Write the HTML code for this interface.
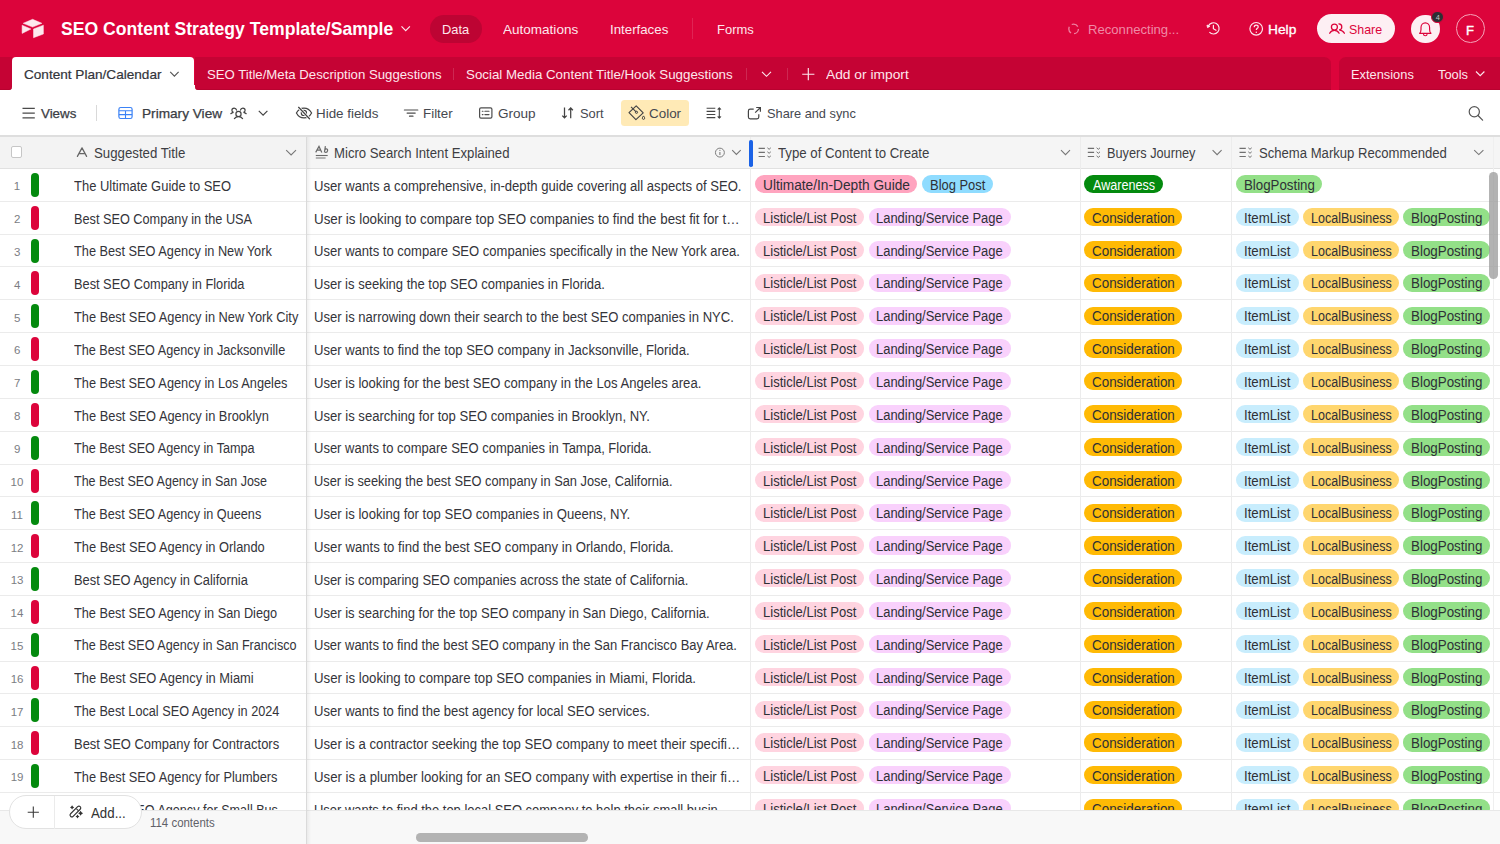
<!DOCTYPE html>
<html><head><meta charset="utf-8">
<style>
*{box-sizing:border-box;margin:0;padding:0}
html,body{width:1500px;height:844px;overflow:hidden;background:#fff}
body{position:relative;font-family:"Liberation Sans",sans-serif;font-size:13px;color:#1d1f25}
.abs{position:absolute;white-space:nowrap;line-height:1}
svg{position:absolute;overflow:visible}
.bx{position:absolute}
.rline{position:absolute;left:0;width:1500px;height:1px;background:#ebebeb}
.bar{position:absolute;left:31px;width:8px;height:24px;border-radius:4px}
.pill{position:absolute;border-radius:9.1px}
</style></head><body>

<!-- TOP BAR -->
<div class="bx" style="left:0;top:0;width:1500px;height:90px;background:#dc043b"></div>
<svg style="left:0;top:0" width="60" height="50" viewBox="0 0 60 50">
  <path d="M32.6 19.3 L41.9 23.3 L32.6 27.1 L23.2 23.3 Z" fill="#fde9ee" stroke="#fde9ee" stroke-width="0.5" stroke-linejoin="round"/>
  <path d="M22.1 25.2 L30.9 29 L22.1 33.4 Z" fill="#fde9ee" stroke="#fde9ee" stroke-width="0.5" stroke-linejoin="round"/>
  <path d="M33.5 29 L43.4 25.2 L43.4 34 L33.5 37.7 Z" fill="#fde9ee" stroke="#fde9ee" stroke-width="0.5" stroke-linejoin="round"/>
</svg>
<svg style="left:0;top:0" width="420" height="50" viewBox="0 0 420 50"><path d="M401.5 26.4 L405.7 30.6 L409.9 26.4" fill="none" stroke="#fde7ed" stroke-width="1.2"/></svg>
<div class="bx" style="left:430.1px;top:14.9px;width:51.8px;height:28px;border-radius:14px;background:#bd0433"></div>
<div class="bx" style="left:692px;top:18.3px;width:1px;height:20.7px;background:rgba(255,255,255,0.13)"></div>
<svg style="left:0;top:0" width="1500" height="50" viewBox="0 0 1500 50">
  <circle cx="1073.6" cy="28.9" r="4.8" fill="none" stroke="#ee80a0" stroke-width="1.3" stroke-dasharray="6.9 3.15"/>
  <path d="M1209.4 32.2 A5.6 5.6 0 1 0 1208.3 26.3" fill="none" stroke="#fde7ed" stroke-width="1.2"/>
  <path d="M1207 25 L1207.5 27.6 L1209.8 26.4 Z" fill="#fde7ed" stroke="#fde7ed" stroke-width="0.9" stroke-linejoin="round"/>
  <path d="M1213.4 25.4 V28.7 L1216 30.3" fill="none" stroke="#fde7ed" stroke-width="1.2" stroke-linecap="round"/>
  <circle cx="1256.2" cy="28.8" r="6.3" fill="none" stroke="#fde7ed" stroke-width="1.2"/>
  <path d="M1254.2 27.2 C1254.2 25.9 1255.1 25.1 1256.2 25.1 C1257.3 25.1 1258.2 25.9 1258.2 26.9 C1258.2 28.2 1256.3 28.4 1256.3 30" fill="none" stroke="#fde7ed" stroke-width="1.2"/>
  <circle cx="1256.3" cy="32.3" r="0.75" fill="#fde7ed"/>
</svg>
<div class="bx" style="left:1316.7px;top:14.4px;width:78.2px;height:28.9px;border-radius:14.5px;background:#fdeff3"></div>
<svg style="left:0;top:0" width="1500" height="50" viewBox="0 0 1500 50">
  <circle cx="1334.4" cy="27" r="3" fill="none" stroke="#dc043b" stroke-width="1.25"/>
  <path d="M1329.7 33.3 C1330.6 31.5 1332.3 30.4 1334.4 30.4 C1336.5 30.4 1338.2 31.5 1339.1 33.3" fill="none" stroke="#dc043b" stroke-width="1.25" stroke-linecap="round"/>
  <path d="M1338.9 23.9 C1340.6 24 1341.8 25.3 1341.8 26.9 C1341.8 28.5 1340.6 29.8 1339.1 29.9 C1341.6 30.2 1343.5 31.5 1344.4 33.3" fill="none" stroke="#dc043b" stroke-width="1.25" stroke-linecap="round"/>
</svg>
<div class="bx" style="left:1411.4px;top:14.6px;width:28.7px;height:28.7px;border-radius:50%;background:#fdeff3"></div>
<svg style="left:0;top:0" width="1500" height="50" viewBox="0 0 1500 50">
  <path d="M1419.6 33.3 C1420.7 32.6 1421 31.4 1421 29.6 V27.6 C1421 24.9 1422.9 22.9 1425.3 22.9 C1427.7 22.9 1429.6 24.9 1429.6 27.6 V29.6 C1429.6 31.4 1429.9 32.6 1431 33.3 Z" fill="none" stroke="#dc043b" stroke-width="1.15" stroke-linejoin="round"/>
  <path d="M1423.5 34 A1.8 1.8 0 0 0 1427.1 34" fill="none" stroke="#dc043b" stroke-width="1.1"/>
</svg>
<div class="bx" style="left:1430.8px;top:11.4px;width:13.4px;height:11.6px;border-radius:6.3px;background:#2e2f33;border:0.8px solid #dc043b"></div>
<div class="abs" style="left:1435.7px;top:14px;font-size:7.5px;color:#c8c8c8">4</div>
<div class="bx" style="left:1456px;top:14.2px;width:28.7px;height:28.7px;border-radius:50%;border:1.1px solid #f5a3b8"></div>
<div class="abs" style="left:1466px;top:24px;font-size:13px;-webkit-text-stroke:0.4px #fff;color:#fff">F</div>
<div class="abs" style="left:61.37px;top:21px;font-size:17.7px;font-weight:700;color:#fff;transform:scaleX(0.9953);transform-origin:0 0;">SEO Content Strategy Template/Sample</div><div class="abs" style="left:442.14px;top:23px;font-size:13px;color:#fde7ed;transform:scaleX(0.9890);transform-origin:0 0;">Data</div><div class="abs" style="left:503.17px;top:23px;font-size:13px;color:#fde7ed;transform:scaleX(1.0405);transform-origin:0 0;">Automations</div><div class="abs" style="left:609.67px;top:23px;font-size:13px;color:#fde7ed;transform:scaleX(1.0208);transform-origin:0 0;">Interfaces</div><div class="abs" style="left:717.03px;top:23px;font-size:13px;color:#fde7ed;transform:scaleX(0.9973);transform-origin:0 0;">Forms</div><div class="abs" style="left:1088.12px;top:23px;font-size:13px;color:#ef8aa6;transform:scaleX(1.0082);transform-origin:0 0;">Reconnecting...</div><div class="abs" style="left:1268.06px;top:23px;font-size:13px;-webkit-text-stroke:0.3px #fff;color:#fff;transform:scaleX(1.0588);transform-origin:0 0;">Help</div><div class="abs" style="left:1349.44px;top:23px;font-size:13px;color:#dc043b;transform:scaleX(0.9541);transform-origin:0 0;">Share</div>

<!-- TABS -->
<div class="bx" style="left:7px;top:85px;width:192px;height:5px;background:#fff"></div>
<div class="bx" style="left:0;top:57.3px;width:11.9px;height:32.7px;background:#c50334;border-bottom-right-radius:3.5px;box-shadow:inset 0 -1px 0 #b8022f"></div>
<div class="bx" style="left:194.5px;top:57.3px;width:1136.2px;height:32.7px;background:#c50334;border-top-right-radius:7px;border-bottom-left-radius:3.5px;box-shadow:inset 0 -1px 0 #b8022f"></div>
<div class="bx" style="left:1338.9px;top:57.3px;width:161.1px;height:32.7px;background:#c50334;border-top-left-radius:7px;box-shadow:inset 0 -1px 0 #b8022f"></div>
<div class="bx" style="left:12.3px;top:57.3px;width:182px;height:33px;background:#fff;border-radius:4px 4px 0 0"></div>
<svg style="left:0;top:0" width="1500" height="100" viewBox="0 0 1500 100">
  <path d="M170.2 71.9 L174.4 76.1 L178.6 71.9" fill="none" stroke="#555" stroke-width="1.15"/>
  <path d="M762 71.9 L766.5 76.3 L771 71.9" fill="none" stroke="#fde7ed" stroke-width="1.15"/>
  <path d="M808.3 68 V80.3 M802.2 74.2 H814.4" fill="none" stroke="#fde7ed" stroke-width="1.15"/>
  <path d="M1476 71.5 L1480.2 75.7 L1484.4 71.5" fill="none" stroke="#fde7ed" stroke-width="1.15"/>
</svg>
<div class="bx" style="left:453px;top:68.3px;width:1px;height:12px;background:rgba(255,255,255,0.15)"></div>
<div class="bx" style="left:745.5px;top:68.3px;width:1px;height:12px;background:rgba(255,255,255,0.15)"></div>
<div class="bx" style="left:787px;top:68.3px;width:1px;height:12px;background:rgba(255,255,255,0.15)"></div>
<div class="abs" style="left:24.42px;top:68px;font-size:13px;-webkit-text-stroke:0.2px #33353b;color:#33353b;transform:scaleX(1.0453);transform-origin:0 0;">Content Plan/Calendar</div><div class="abs" style="left:206.61px;top:68px;font-size:13px;color:#fde7ed;transform:scaleX(1.0143);transform-origin:0 0;">SEO Title/Meta Description Suggestions</div><div class="abs" style="left:466.10px;top:68px;font-size:13px;color:#fde7ed;transform:scaleX(1.0250);transform-origin:0 0;">Social Media Content Title/Hook Suggestions</div><div class="abs" style="left:825.67px;top:68px;font-size:13px;color:#fde7ed;transform:scaleX(1.0603);transform-origin:0 0;">Add or import</div><div class="abs" style="left:1350.64px;top:68px;font-size:13px;color:#fde7ed;transform:scaleX(0.9875);transform-origin:0 0;">Extensions</div><div class="abs" style="left:1437.71px;top:68px;font-size:13px;color:#fde7ed;transform:scaleX(0.9896);transform-origin:0 0;">Tools</div>

<!-- TOOLBAR -->
<div class="bx" style="left:0;top:135px;width:1500px;height:2px;background:#dedede"></div>
<div class="bx" style="left:96px;top:105px;width:1px;height:15.8px;background:#d9d9d9"></div>
<div class="bx" style="left:620.9px;top:99.8px;width:68px;height:26.1px;border-radius:3.5px;background:#ffeab6"></div>
<svg style="left:0;top:0" width="1500" height="140" viewBox="0 0 1500 140">
  <path d="M22.5 108.4 H34.8 M22.5 113.1 H34.8 M22.5 117.8 H34.8" stroke="#4a4a4a" stroke-width="1.2"/>
  <rect x="118.9" y="107.5" width="13.2" height="11" rx="1.8" fill="none" stroke="#3b82f6" stroke-width="1.2"/>
  <path d="M118.9 110.8 H132.1 M118.9 114.6 H132.1 M125.5 110.8 V118.5" stroke="#3b82f6" stroke-width="1.1"/>
  <circle cx="238.5" cy="113.9" r="2.6" fill="none" stroke="#444" stroke-width="1.2"/>
  <path d="M234.4 118.6 C235.3 117.3 236.7 116.6 238.5 116.6 C240.3 116.6 241.7 117.3 242.6 118.6" fill="none" stroke="#444" stroke-width="1.2" stroke-linecap="round"/>
  <path d="M236.6 110.2 C236.3 108.9 235.4 108.1 234.2 108.1 C232.9 108.1 231.9 109.1 231.9 110.3 C231.9 111.4 232.6 112.1 233.5 112.4 C232.4 112.6 231.5 113.1 230.8 113.7" fill="none" stroke="#444" stroke-width="1.2" stroke-linecap="round"/>
  <path d="M240.4 110.2 C240.7 108.9 241.6 108.1 242.8 108.1 C244.1 108.1 245.1 109.1 245.1 110.3 C245.1 111.4 244.4 112.1 243.5 112.4 C244.6 112.6 245.5 113.1 246.2 113.7" fill="none" stroke="#444" stroke-width="1.2" stroke-linecap="round"/>
  <path d="M258.8 110.9 L263.1 115.2 L267.4 110.9" fill="none" stroke="#444" stroke-width="1.2"/>
  <path d="M296.4 113 C298 110 300.8 108.1 304 108.1 C307.2 108.1 310 110 311.6 113 C310 116 307.2 117.9 304 117.9 C300.8 117.9 298 116 296.4 113Z" fill="none" stroke="#444" stroke-width="1.2"/>
  <circle cx="303.9" cy="112.9" r="2.6" fill="none" stroke="#444" stroke-width="1.2"/>
  <path d="M298.6 107.3 L309.5 118.8" stroke="#fff" stroke-width="2.8"/>
  <path d="M298.6 107.3 L309.5 118.8" stroke="#444" stroke-width="1.25" stroke-linecap="round"/>
  <path d="M404.4 110 H417.8 M407.1 113.1 H415.2 M409.5 116.2 H413" stroke="#4d4d4d" stroke-width="1.2" stroke-linecap="round"/>
  <rect x="479.6" y="107.9" width="12.3" height="10.3" rx="1.4" fill="none" stroke="#4d4d4d" stroke-width="1.2"/>
  <path d="M482.3 111.2 H483 M482.3 114.6 H483 M484.9 111.2 H489 M484.9 114.6 H489" stroke="#4d4d4d" stroke-width="1.15" stroke-linecap="round"/>
  <path d="M564.5 107.6 V117.8 M562.3 115.6 L564.5 117.9 L566.7 115.6 M570.7 118.2 V108 M568.5 110.3 L570.7 108 L572.9 110.3" fill="none" stroke="#444" stroke-width="1.25"/>
  <path d="M636.2 105.8 L643.2 112.8 L635.9 119.6 L629 112.7 Z" fill="none" stroke="#444" stroke-width="1.15" stroke-linejoin="round"/>
  <path d="M631 106.8 L636.4 112.2" stroke="#444" stroke-width="1.1"/>
  <circle cx="636.5" cy="112.3" r="1.1" fill="none" stroke="#444" stroke-width="1"/>
  <path d="M643.5 115.9 C644.3 116.9 644.7 117.6 644.7 118.2 C644.7 118.9 644.2 119.4 643.5 119.4 C642.8 119.4 642.3 118.9 642.3 118.2 C642.3 117.6 642.7 116.9 643.5 115.9Z" fill="none" stroke="#444" stroke-width="1"/>
  <path d="M706.6 108.3 H715.3 M706.6 111.4 H715.3 M706.6 114.5 H715.3 M706.6 117.6 H715.3" stroke="#444" stroke-width="1.1"/>
  <path d="M719.3 108.4 V117.6" stroke="#444" stroke-width="1.1"/>
  <path d="M717.7 109.3 L719.3 107.5 L720.9 109.3 Z M717.7 116.7 L719.3 118.5 L720.9 116.7 Z" fill="#444" stroke="#444" stroke-width="0.7" stroke-linejoin="round"/>
  <path d="M753.7 109.2 H750.2 C749.2 109.2 748.4 110 748.4 111 V117.1 C748.4 118.1 749.2 118.9 750.2 118.9 H757 C758 118.9 758.8 118.1 758.8 117.1 V114.2" fill="none" stroke="#444" stroke-width="1.2"/>
  <path d="M756.2 107.5 H760.4 V111.7 M760.2 107.7 L755.2 112.6" fill="none" stroke="#444" stroke-width="1.2"/>
  <circle cx="1474.3" cy="111.8" r="5.1" fill="none" stroke="#555" stroke-width="1.2"/>
  <path d="M1478 115.5 L1482.6 120.1" stroke="#555" stroke-width="1.25" stroke-linecap="round"/>
</svg>
<div class="abs" style="left:40.73px;top:107px;font-size:13px;-webkit-text-stroke:0.25px #3a3d44;color:#3a3d44;transform:scaleX(1.0256);transform-origin:0 0;">Views</div><div class="abs" style="left:141.67px;top:107px;font-size:13px;-webkit-text-stroke:0.25px #3a3d44;color:#3a3d44;transform:scaleX(1.0491);transform-origin:0 0;">Primary View</div><div class="abs" style="left:316.40px;top:107px;font-size:13px;color:#45484f;transform:scaleX(1.0290);transform-origin:0 0;">Hide fields</div><div class="abs" style="left:423.20px;top:107px;font-size:13px;color:#45484f;transform:scaleX(1.0281);transform-origin:0 0;">Filter</div><div class="abs" style="left:497.72px;top:107px;font-size:13px;color:#45484f;transform:scaleX(1.0419);transform-origin:0 0;">Group</div><div class="abs" style="left:580.32px;top:107px;font-size:13px;color:#45484f;transform:scaleX(0.9896);transform-origin:0 0;">Sort</div><div class="abs" style="left:648.93px;top:107px;font-size:13px;color:#45484f;transform:scaleX(1.0323);transform-origin:0 0;">Color</div><div class="abs" style="left:767.02px;top:107px;font-size:13px;color:#45484f;transform:scaleX(0.9831);transform-origin:0 0;">Share and sync</div>

<!-- GRID HEADER -->
<div class="bx" style="left:0;top:137px;width:1500px;height:31.2px;background:#f5f5f5"></div>
<div class="bx" style="left:0;top:137px;width:306px;height:31.2px;background:#f3f3f3"></div>
<div class="bx" style="left:0;top:167.9px;width:1500px;height:1px;background:#e1e1e1"></div>
<div class="bx" style="left:11.1px;top:146.4px;width:11.3px;height:11.3px;border:1px solid #c6c6c6;border-radius:2px;background:#fff"></div>
<svg style="left:0;top:0" width="1500" height="170" viewBox="0 0 1500 170">
  <path d="M77.4 156.4 L82 147.9 L86.6 156.4 M79.2 153.5 H84.8" fill="none" stroke="#666" stroke-width="1.25" stroke-linecap="round" stroke-linejoin="round"/>
  <path d="M286.2 150.1 L291.1 155 L296 150.1" fill="none" stroke="#777" stroke-width="1.1"/>
  <path d="M315.7 152.4 L319 146.4 L321.8 152.4 M316.9 150.2 H320.6" fill="none" stroke="#6a6a6a" stroke-width="1.2"/>
  <path d="M325.4 146.2 L324.4 152.4 M324.7 150.5 C324.9 149.4 325.6 148.9 326.4 148.9 C327.2 148.9 327.8 149.6 327.6 150.6 C327.4 151.7 326.5 152.4 325.6 152.3 C325 152.3 324.6 152 324.5 151.6" fill="none" stroke="#6a6a6a" stroke-width="1.2"/>
  <path d="M315.8 155.5 H327.7" stroke="#6a6a6a" stroke-width="1.1"/>
  <path d="M315.8 158 H325.6" stroke="#8a8a8a" stroke-width="1.2"/>
  <circle cx="719.9" cy="152.6" r="4.45" fill="none" stroke="#777" stroke-width="0.95"/>
  <path d="M719.9 151.9 V155" stroke="#777" stroke-width="1.05"/>
  <circle cx="719.9" cy="150.3" r="0.6" fill="#777"/>
  <path d="M732.2 150.1 L736.4 154.4 L740.7 150.1" fill="none" stroke="#777" stroke-width="1.1"/>
  <g id="ms" stroke="#707070" fill="none">
    <path d="M758.6 148.4 H764.9 M758.6 152.4 H764.9 M758.6 156.5 H764.9" stroke-width="1.1"/>
    <path d="M767.4 147.8 L769.1 149.3 L770.8 147.8 M767.4 151.8 L769.1 153.3 L770.8 151.8 M767.4 155.9 L769.1 157.4 L770.8 155.9" stroke-width="1"/>
  </g>
  <path d="M1061 150.1 L1065.5 154.6 L1070 150.1" fill="none" stroke="#777" stroke-width="1.1"/>
  <use href="#ms" transform="translate(329.2 0)"/>
  <path d="M1212.6 150.1 L1217.1 154.6 L1221.6 150.1" fill="none" stroke="#777" stroke-width="1.1"/>
  <use href="#ms" transform="translate(480.9 0)"/>
  <path d="M1474.2 150.1 L1478.8 154.6 L1483.4 150.1" fill="none" stroke="#777" stroke-width="1.1"/>
</svg>
<div class="abs" style="left:93.80px;top:146px;font-size:14px;color:#3d3e43;transform:scaleX(0.9457);transform-origin:0 0;">Suggested Title</div><div class="abs" style="left:334.41px;top:146px;font-size:14px;color:#3d3e43;transform:scaleX(0.9397);transform-origin:0 0;">Micro Search Intent Explained</div><div class="abs" style="left:778.20px;top:146px;font-size:14px;color:#3d3e43;transform:scaleX(0.9442);transform-origin:0 0;">Type of Content to Create</div><div class="abs" style="left:1106.65px;top:146px;font-size:14px;color:#3d3e43;transform:scaleX(0.9087);transform-origin:0 0;">Buyers Journey</div><div class="abs" style="left:1258.61px;top:146px;font-size:14px;color:#3d3e43;transform:scaleX(0.9355);transform-origin:0 0;">Schema Markup Recommended</div>

<!-- ROWS -->
<div class="bx" style="left:0;top:168.9px;width:1500px;height:641.6px;overflow:hidden">
 <div class="bx" style="left:0;top:-168.9px;width:1500px;height:844px">
<div class="rline" style="top:200.80px"></div>
<div class="abs" style="left:13.85px;top:181px;font-size:11.5px;color:#7b7d83;">1</div>
<div class="bar" style="top:172.96px;background:#048a0e"></div>
<div class="abs" style="left:74.31px;top:179px;font-size:14px;color:#34343a;transform:scaleX(0.9261);transform-origin:0 0;">The Ultimate Guide to SEO</div>
<div class="abs" style="left:314.18px;top:179px;font-size:14px;color:#34343a;transform:scaleX(0.9359);transform-origin:0 0;">User wants a comprehensive, in-depth guide covering all aspects of SEO.</div>
<div class="pill" style="left:755.10px;top:175.16px;width:162.40px;height:18.2px;background:#ffa4bf"></div><div class="abs" style="left:762.84px;top:178px;font-size:14px;color:#2e3036;transform:scaleX(0.9784);transform-origin:0 0;">Ultimate/In-Depth Guide</div>
<div class="pill" style="left:922.00px;top:175.16px;width:71.00px;height:18.2px;background:#8fdcff"></div><div class="abs" style="left:929.63px;top:178px;font-size:14px;color:#2e3036;transform:scaleX(0.9240);transform-origin:0 0;">Blog Post</div>
<div class="pill" style="left:1084.30px;top:175.16px;width:78.70px;height:18.2px;background:#048a0e"></div><div class="abs" style="left:1092.97px;top:178px;font-size:14px;color:#fff;transform:scaleX(0.9008);transform-origin:0 0;">Awareness</div>
<div class="pill" style="left:1236.30px;top:175.16px;width:86.00px;height:18.2px;background:#93e088"></div><div class="abs" style="left:1244.20px;top:178px;font-size:14px;color:#2e3036;transform:scaleX(0.9483);transform-origin:0 0;">BlogPosting</div>
<div class="rline" style="top:233.64px"></div>
<div class="abs" style="left:14.01px;top:214px;font-size:11.5px;color:#7b7d83;">2</div>
<div class="bar" style="top:205.80px;background:#dc043b"></div>
<div class="abs" style="left:73.55px;top:212px;font-size:14px;color:#34343a;transform:scaleX(0.9081);transform-origin:0 0;">Best SEO Company in the USA</div>
<div class="abs" style="left:314.17px;top:212px;font-size:14px;color:#34343a;transform:scaleX(0.9527);transform-origin:0 0;">User is looking to compare top SEO companies to find the best fit for t…</div>
<div class="pill" style="left:755.20px;top:208.00px;width:108.90px;height:18.2px;background:#ffd4e0"></div><div class="abs" style="left:762.53px;top:211px;font-size:14px;color:#2e3036;transform:scaleX(0.9302);transform-origin:0 0;">Listicle/List Post</div>
<div class="pill" style="left:868.50px;top:208.00px;width:142.10px;height:18.2px;background:#f9d1fc"></div><div class="abs" style="left:876.03px;top:211px;font-size:14px;color:#2e3036;transform:scaleX(0.9250);transform-origin:0 0;">Landing/Service Page</div>
<div class="pill" style="left:1084.30px;top:208.00px;width:98.00px;height:18.2px;background:#ffba05"></div><div class="abs" style="left:1092.33px;top:211px;font-size:14px;color:#2e3036;transform:scaleX(0.9587);transform-origin:0 0;">Consideration</div>
<div class="pill" style="left:1236.30px;top:208.00px;width:62.60px;height:18.2px;background:#c8edfd"></div><div class="abs" style="left:1243.88px;top:211px;font-size:14px;color:#2e3036;transform:scaleX(0.9454);transform-origin:0 0;">ItemList</div>
<div class="pill" style="left:1303.30px;top:208.00px;width:95.50px;height:18.2px;background:#ffd66e"></div><div class="abs" style="left:1310.87px;top:211px;font-size:14px;color:#2e3036;transform:scaleX(0.8937);transform-origin:0 0;">LocalBusiness</div>
<div class="pill" style="left:1403.30px;top:208.00px;width:86.90px;height:18.2px;background:#93e088"></div><div class="abs" style="left:1411.10px;top:211px;font-size:14px;color:#2e3036;transform:scaleX(0.9551);transform-origin:0 0;">BlogPosting</div>
<div class="rline" style="top:266.48px"></div>
<div class="abs" style="left:14.04px;top:247px;font-size:11.5px;color:#7b7d83;">3</div>
<div class="bar" style="top:238.64px;background:#048a0e"></div>
<div class="abs" style="left:74.31px;top:244px;font-size:14px;color:#34343a;transform:scaleX(0.9109);transform-origin:0 0;">The Best SEO Agency in New York</div>
<div class="abs" style="left:314.19px;top:244px;font-size:14px;color:#34343a;transform:scaleX(0.9310);transform-origin:0 0;">User wants to compare SEO companies specifically in the New York area.</div>
<div class="pill" style="left:755.20px;top:240.84px;width:108.90px;height:18.2px;background:#ffd4e0"></div><div class="abs" style="left:762.53px;top:244px;font-size:14px;color:#2e3036;transform:scaleX(0.9302);transform-origin:0 0;">Listicle/List Post</div>
<div class="pill" style="left:868.50px;top:240.84px;width:142.10px;height:18.2px;background:#f9d1fc"></div><div class="abs" style="left:876.03px;top:244px;font-size:14px;color:#2e3036;transform:scaleX(0.9250);transform-origin:0 0;">Landing/Service Page</div>
<div class="pill" style="left:1084.30px;top:240.84px;width:98.00px;height:18.2px;background:#ffba05"></div><div class="abs" style="left:1092.33px;top:244px;font-size:14px;color:#2e3036;transform:scaleX(0.9587);transform-origin:0 0;">Consideration</div>
<div class="pill" style="left:1236.30px;top:240.84px;width:62.60px;height:18.2px;background:#c8edfd"></div><div class="abs" style="left:1243.88px;top:244px;font-size:14px;color:#2e3036;transform:scaleX(0.9454);transform-origin:0 0;">ItemList</div>
<div class="pill" style="left:1303.30px;top:240.84px;width:95.50px;height:18.2px;background:#ffd66e"></div><div class="abs" style="left:1310.87px;top:244px;font-size:14px;color:#2e3036;transform:scaleX(0.8937);transform-origin:0 0;">LocalBusiness</div>
<div class="pill" style="left:1403.30px;top:240.84px;width:86.90px;height:18.2px;background:#93e088"></div><div class="abs" style="left:1411.10px;top:244px;font-size:14px;color:#2e3036;transform:scaleX(0.9551);transform-origin:0 0;">BlogPosting</div>
<div class="rline" style="top:299.32px"></div>
<div class="abs" style="left:14.04px;top:280px;font-size:11.5px;color:#7b7d83;">4</div>
<div class="bar" style="top:271.48px;background:#dc043b"></div>
<div class="abs" style="left:73.55px;top:277px;font-size:14px;color:#34343a;transform:scaleX(0.9127);transform-origin:0 0;">Best SEO Company in Florida</div>
<div class="abs" style="left:314.19px;top:277px;font-size:14px;color:#34343a;transform:scaleX(0.9302);transform-origin:0 0;">User is seeking the top SEO companies in Florida.</div>
<div class="pill" style="left:755.20px;top:273.68px;width:108.90px;height:18.2px;background:#ffd4e0"></div><div class="abs" style="left:762.53px;top:276px;font-size:14px;color:#2e3036;transform:scaleX(0.9302);transform-origin:0 0;">Listicle/List Post</div>
<div class="pill" style="left:868.50px;top:273.68px;width:142.10px;height:18.2px;background:#f9d1fc"></div><div class="abs" style="left:876.03px;top:276px;font-size:14px;color:#2e3036;transform:scaleX(0.9250);transform-origin:0 0;">Landing/Service Page</div>
<div class="pill" style="left:1084.30px;top:273.68px;width:98.00px;height:18.2px;background:#ffba05"></div><div class="abs" style="left:1092.33px;top:276px;font-size:14px;color:#2e3036;transform:scaleX(0.9587);transform-origin:0 0;">Consideration</div>
<div class="pill" style="left:1236.30px;top:273.68px;width:62.60px;height:18.2px;background:#c8edfd"></div><div class="abs" style="left:1243.88px;top:276px;font-size:14px;color:#2e3036;transform:scaleX(0.9454);transform-origin:0 0;">ItemList</div>
<div class="pill" style="left:1303.30px;top:273.68px;width:95.50px;height:18.2px;background:#ffd66e"></div><div class="abs" style="left:1310.87px;top:276px;font-size:14px;color:#2e3036;transform:scaleX(0.8937);transform-origin:0 0;">LocalBusiness</div>
<div class="pill" style="left:1403.30px;top:273.68px;width:86.90px;height:18.2px;background:#93e088"></div><div class="abs" style="left:1411.10px;top:276px;font-size:14px;color:#2e3036;transform:scaleX(0.9551);transform-origin:0 0;">BlogPosting</div>
<div class="rline" style="top:332.16px"></div>
<div class="abs" style="left:14.01px;top:313px;font-size:11.5px;color:#7b7d83;">5</div>
<div class="bar" style="top:304.32px;background:#048a0e"></div>
<div class="abs" style="left:74.31px;top:310px;font-size:14px;color:#34343a;transform:scaleX(0.9151);transform-origin:0 0;">The Best SEO Agency in New York City</div>
<div class="abs" style="left:314.19px;top:310px;font-size:14px;color:#34343a;transform:scaleX(0.9336);transform-origin:0 0;">User is narrowing down their search to the best SEO companies in NYC.</div>
<div class="pill" style="left:755.20px;top:306.52px;width:108.90px;height:18.2px;background:#ffd4e0"></div><div class="abs" style="left:762.53px;top:309px;font-size:14px;color:#2e3036;transform:scaleX(0.9302);transform-origin:0 0;">Listicle/List Post</div>
<div class="pill" style="left:868.50px;top:306.52px;width:142.10px;height:18.2px;background:#f9d1fc"></div><div class="abs" style="left:876.03px;top:309px;font-size:14px;color:#2e3036;transform:scaleX(0.9250);transform-origin:0 0;">Landing/Service Page</div>
<div class="pill" style="left:1084.30px;top:306.52px;width:98.00px;height:18.2px;background:#ffba05"></div><div class="abs" style="left:1092.33px;top:309px;font-size:14px;color:#2e3036;transform:scaleX(0.9587);transform-origin:0 0;">Consideration</div>
<div class="pill" style="left:1236.30px;top:306.52px;width:62.60px;height:18.2px;background:#c8edfd"></div><div class="abs" style="left:1243.88px;top:309px;font-size:14px;color:#2e3036;transform:scaleX(0.9454);transform-origin:0 0;">ItemList</div>
<div class="pill" style="left:1303.30px;top:306.52px;width:95.50px;height:18.2px;background:#ffd66e"></div><div class="abs" style="left:1310.87px;top:309px;font-size:14px;color:#2e3036;transform:scaleX(0.8937);transform-origin:0 0;">LocalBusiness</div>
<div class="pill" style="left:1403.30px;top:306.52px;width:86.90px;height:18.2px;background:#93e088"></div><div class="abs" style="left:1411.10px;top:309px;font-size:14px;color:#2e3036;transform:scaleX(0.9551);transform-origin:0 0;">BlogPosting</div>
<div class="rline" style="top:365.00px"></div>
<div class="abs" style="left:13.97px;top:345px;font-size:11.5px;color:#7b7d83;">6</div>
<div class="bar" style="top:337.16px;background:#dc043b"></div>
<div class="abs" style="left:74.31px;top:343px;font-size:14px;color:#34343a;transform:scaleX(0.9048);transform-origin:0 0;">The Best SEO Agency in Jacksonville</div>
<div class="abs" style="left:314.19px;top:343px;font-size:14px;color:#34343a;transform:scaleX(0.9354);transform-origin:0 0;">User wants to find the top SEO company in Jacksonville, Florida.</div>
<div class="pill" style="left:755.20px;top:339.36px;width:108.90px;height:18.2px;background:#ffd4e0"></div><div class="abs" style="left:762.53px;top:342px;font-size:14px;color:#2e3036;transform:scaleX(0.9302);transform-origin:0 0;">Listicle/List Post</div>
<div class="pill" style="left:868.50px;top:339.36px;width:142.10px;height:18.2px;background:#f9d1fc"></div><div class="abs" style="left:876.03px;top:342px;font-size:14px;color:#2e3036;transform:scaleX(0.9250);transform-origin:0 0;">Landing/Service Page</div>
<div class="pill" style="left:1084.30px;top:339.36px;width:98.00px;height:18.2px;background:#ffba05"></div><div class="abs" style="left:1092.33px;top:342px;font-size:14px;color:#2e3036;transform:scaleX(0.9587);transform-origin:0 0;">Consideration</div>
<div class="pill" style="left:1236.30px;top:339.36px;width:62.60px;height:18.2px;background:#c8edfd"></div><div class="abs" style="left:1243.88px;top:342px;font-size:14px;color:#2e3036;transform:scaleX(0.9454);transform-origin:0 0;">ItemList</div>
<div class="pill" style="left:1303.30px;top:339.36px;width:95.50px;height:18.2px;background:#ffd66e"></div><div class="abs" style="left:1310.87px;top:342px;font-size:14px;color:#2e3036;transform:scaleX(0.8937);transform-origin:0 0;">LocalBusiness</div>
<div class="pill" style="left:1403.30px;top:339.36px;width:86.90px;height:18.2px;background:#93e088"></div><div class="abs" style="left:1411.10px;top:342px;font-size:14px;color:#2e3036;transform:scaleX(0.9551);transform-origin:0 0;">BlogPosting</div>
<div class="rline" style="top:397.84px"></div>
<div class="abs" style="left:14.01px;top:378px;font-size:11.5px;color:#7b7d83;">7</div>
<div class="bar" style="top:370.00px;background:#048a0e"></div>
<div class="abs" style="left:74.31px;top:376px;font-size:14px;color:#34343a;transform:scaleX(0.9111);transform-origin:0 0;">The Best SEO Agency in Los Angeles</div>
<div class="abs" style="left:314.19px;top:376px;font-size:14px;color:#34343a;transform:scaleX(0.9355);transform-origin:0 0;">User is looking for the best SEO company in the Los Angeles area.</div>
<div class="pill" style="left:755.20px;top:372.20px;width:108.90px;height:18.2px;background:#ffd4e0"></div><div class="abs" style="left:762.53px;top:375px;font-size:14px;color:#2e3036;transform:scaleX(0.9302);transform-origin:0 0;">Listicle/List Post</div>
<div class="pill" style="left:868.50px;top:372.20px;width:142.10px;height:18.2px;background:#f9d1fc"></div><div class="abs" style="left:876.03px;top:375px;font-size:14px;color:#2e3036;transform:scaleX(0.9250);transform-origin:0 0;">Landing/Service Page</div>
<div class="pill" style="left:1084.30px;top:372.20px;width:98.00px;height:18.2px;background:#ffba05"></div><div class="abs" style="left:1092.33px;top:375px;font-size:14px;color:#2e3036;transform:scaleX(0.9587);transform-origin:0 0;">Consideration</div>
<div class="pill" style="left:1236.30px;top:372.20px;width:62.60px;height:18.2px;background:#c8edfd"></div><div class="abs" style="left:1243.88px;top:375px;font-size:14px;color:#2e3036;transform:scaleX(0.9454);transform-origin:0 0;">ItemList</div>
<div class="pill" style="left:1303.30px;top:372.20px;width:95.50px;height:18.2px;background:#ffd66e"></div><div class="abs" style="left:1310.87px;top:375px;font-size:14px;color:#2e3036;transform:scaleX(0.8937);transform-origin:0 0;">LocalBusiness</div>
<div class="pill" style="left:1403.30px;top:372.20px;width:86.90px;height:18.2px;background:#93e088"></div><div class="abs" style="left:1411.10px;top:375px;font-size:14px;color:#2e3036;transform:scaleX(0.9551);transform-origin:0 0;">BlogPosting</div>
<div class="rline" style="top:430.68px"></div>
<div class="abs" style="left:14.01px;top:411px;font-size:11.5px;color:#7b7d83;">8</div>
<div class="bar" style="top:402.84px;background:#dc043b"></div>
<div class="abs" style="left:74.31px;top:409px;font-size:14px;color:#34343a;transform:scaleX(0.9170);transform-origin:0 0;">The Best SEO Agency in Brooklyn</div>
<div class="abs" style="left:314.19px;top:409px;font-size:14px;color:#34343a;transform:scaleX(0.9347);transform-origin:0 0;">User is searching for top SEO companies in Brooklyn, NY.</div>
<div class="pill" style="left:755.20px;top:405.04px;width:108.90px;height:18.2px;background:#ffd4e0"></div><div class="abs" style="left:762.53px;top:408px;font-size:14px;color:#2e3036;transform:scaleX(0.9302);transform-origin:0 0;">Listicle/List Post</div>
<div class="pill" style="left:868.50px;top:405.04px;width:142.10px;height:18.2px;background:#f9d1fc"></div><div class="abs" style="left:876.03px;top:408px;font-size:14px;color:#2e3036;transform:scaleX(0.9250);transform-origin:0 0;">Landing/Service Page</div>
<div class="pill" style="left:1084.30px;top:405.04px;width:98.00px;height:18.2px;background:#ffba05"></div><div class="abs" style="left:1092.33px;top:408px;font-size:14px;color:#2e3036;transform:scaleX(0.9587);transform-origin:0 0;">Consideration</div>
<div class="pill" style="left:1236.30px;top:405.04px;width:62.60px;height:18.2px;background:#c8edfd"></div><div class="abs" style="left:1243.88px;top:408px;font-size:14px;color:#2e3036;transform:scaleX(0.9454);transform-origin:0 0;">ItemList</div>
<div class="pill" style="left:1303.30px;top:405.04px;width:95.50px;height:18.2px;background:#ffd66e"></div><div class="abs" style="left:1310.87px;top:408px;font-size:14px;color:#2e3036;transform:scaleX(0.8937);transform-origin:0 0;">LocalBusiness</div>
<div class="pill" style="left:1403.30px;top:405.04px;width:86.90px;height:18.2px;background:#93e088"></div><div class="abs" style="left:1411.10px;top:408px;font-size:14px;color:#2e3036;transform:scaleX(0.9551);transform-origin:0 0;">BlogPosting</div>
<div class="rline" style="top:463.52px"></div>
<div class="abs" style="left:13.99px;top:444px;font-size:11.5px;color:#7b7d83;">9</div>
<div class="bar" style="top:435.68px;background:#048a0e"></div>
<div class="abs" style="left:74.32px;top:441px;font-size:14px;color:#34343a;transform:scaleX(0.9044);transform-origin:0 0;">The Best SEO Agency in Tampa</div>
<div class="abs" style="left:314.19px;top:441px;font-size:14px;color:#34343a;transform:scaleX(0.9279);transform-origin:0 0;">User wants to compare SEO companies in Tampa, Florida.</div>
<div class="pill" style="left:755.20px;top:437.88px;width:108.90px;height:18.2px;background:#ffd4e0"></div><div class="abs" style="left:762.53px;top:441px;font-size:14px;color:#2e3036;transform:scaleX(0.9302);transform-origin:0 0;">Listicle/List Post</div>
<div class="pill" style="left:868.50px;top:437.88px;width:142.10px;height:18.2px;background:#f9d1fc"></div><div class="abs" style="left:876.03px;top:441px;font-size:14px;color:#2e3036;transform:scaleX(0.9250);transform-origin:0 0;">Landing/Service Page</div>
<div class="pill" style="left:1084.30px;top:437.88px;width:98.00px;height:18.2px;background:#ffba05"></div><div class="abs" style="left:1092.33px;top:441px;font-size:14px;color:#2e3036;transform:scaleX(0.9587);transform-origin:0 0;">Consideration</div>
<div class="pill" style="left:1236.30px;top:437.88px;width:62.60px;height:18.2px;background:#c8edfd"></div><div class="abs" style="left:1243.88px;top:441px;font-size:14px;color:#2e3036;transform:scaleX(0.9454);transform-origin:0 0;">ItemList</div>
<div class="pill" style="left:1303.30px;top:437.88px;width:95.50px;height:18.2px;background:#ffd66e"></div><div class="abs" style="left:1310.87px;top:441px;font-size:14px;color:#2e3036;transform:scaleX(0.8937);transform-origin:0 0;">LocalBusiness</div>
<div class="pill" style="left:1403.30px;top:437.88px;width:86.90px;height:18.2px;background:#93e088"></div><div class="abs" style="left:1411.10px;top:441px;font-size:14px;color:#2e3036;transform:scaleX(0.9551);transform-origin:0 0;">BlogPosting</div>
<div class="rline" style="top:496.36px"></div>
<div class="abs" style="left:10.60px;top:477px;font-size:11.5px;color:#7b7d83;">10</div>
<div class="bar" style="top:468.52px;background:#dc043b"></div>
<div class="abs" style="left:74.32px;top:474px;font-size:14px;color:#34343a;transform:scaleX(0.8922);transform-origin:0 0;">The Best SEO Agency in San Jose</div>
<div class="abs" style="left:314.21px;top:474px;font-size:14px;color:#34343a;transform:scaleX(0.9158);transform-origin:0 0;">User is seeking the best SEO company in San Jose, California.</div>
<div class="pill" style="left:755.20px;top:470.72px;width:108.90px;height:18.2px;background:#ffd4e0"></div><div class="abs" style="left:762.53px;top:474px;font-size:14px;color:#2e3036;transform:scaleX(0.9302);transform-origin:0 0;">Listicle/List Post</div>
<div class="pill" style="left:868.50px;top:470.72px;width:142.10px;height:18.2px;background:#f9d1fc"></div><div class="abs" style="left:876.03px;top:474px;font-size:14px;color:#2e3036;transform:scaleX(0.9250);transform-origin:0 0;">Landing/Service Page</div>
<div class="pill" style="left:1084.30px;top:470.72px;width:98.00px;height:18.2px;background:#ffba05"></div><div class="abs" style="left:1092.33px;top:474px;font-size:14px;color:#2e3036;transform:scaleX(0.9587);transform-origin:0 0;">Consideration</div>
<div class="pill" style="left:1236.30px;top:470.72px;width:62.60px;height:18.2px;background:#c8edfd"></div><div class="abs" style="left:1243.88px;top:474px;font-size:14px;color:#2e3036;transform:scaleX(0.9454);transform-origin:0 0;">ItemList</div>
<div class="pill" style="left:1303.30px;top:470.72px;width:95.50px;height:18.2px;background:#ffd66e"></div><div class="abs" style="left:1310.87px;top:474px;font-size:14px;color:#2e3036;transform:scaleX(0.8937);transform-origin:0 0;">LocalBusiness</div>
<div class="pill" style="left:1403.30px;top:470.72px;width:86.90px;height:18.2px;background:#93e088"></div><div class="abs" style="left:1411.10px;top:474px;font-size:14px;color:#2e3036;transform:scaleX(0.9551);transform-origin:0 0;">BlogPosting</div>
<div class="rline" style="top:529.20px"></div>
<div class="abs" style="left:11.08px;top:510px;font-size:11.5px;color:#7b7d83;">11</div>
<div class="bar" style="top:501.36px;background:#048a0e"></div>
<div class="abs" style="left:74.32px;top:507px;font-size:14px;color:#34343a;transform:scaleX(0.9044);transform-origin:0 0;">The Best SEO Agency in Queens</div>
<div class="abs" style="left:314.18px;top:507px;font-size:14px;color:#34343a;transform:scaleX(0.9367);transform-origin:0 0;">User is looking for top SEO companies in Queens, NY.</div>
<div class="pill" style="left:755.20px;top:503.56px;width:108.90px;height:18.2px;background:#ffd4e0"></div><div class="abs" style="left:762.53px;top:506px;font-size:14px;color:#2e3036;transform:scaleX(0.9302);transform-origin:0 0;">Listicle/List Post</div>
<div class="pill" style="left:868.50px;top:503.56px;width:142.10px;height:18.2px;background:#f9d1fc"></div><div class="abs" style="left:876.03px;top:506px;font-size:14px;color:#2e3036;transform:scaleX(0.9250);transform-origin:0 0;">Landing/Service Page</div>
<div class="pill" style="left:1084.30px;top:503.56px;width:98.00px;height:18.2px;background:#ffba05"></div><div class="abs" style="left:1092.33px;top:506px;font-size:14px;color:#2e3036;transform:scaleX(0.9587);transform-origin:0 0;">Consideration</div>
<div class="pill" style="left:1236.30px;top:503.56px;width:62.60px;height:18.2px;background:#c8edfd"></div><div class="abs" style="left:1243.88px;top:506px;font-size:14px;color:#2e3036;transform:scaleX(0.9454);transform-origin:0 0;">ItemList</div>
<div class="pill" style="left:1303.30px;top:503.56px;width:95.50px;height:18.2px;background:#ffd66e"></div><div class="abs" style="left:1310.87px;top:506px;font-size:14px;color:#2e3036;transform:scaleX(0.8937);transform-origin:0 0;">LocalBusiness</div>
<div class="pill" style="left:1403.30px;top:503.56px;width:86.90px;height:18.2px;background:#93e088"></div><div class="abs" style="left:1411.10px;top:506px;font-size:14px;color:#2e3036;transform:scaleX(0.9551);transform-origin:0 0;">BlogPosting</div>
<div class="rline" style="top:562.04px"></div>
<div class="abs" style="left:10.67px;top:543px;font-size:11.5px;color:#7b7d83;">12</div>
<div class="bar" style="top:534.20px;background:#dc043b"></div>
<div class="abs" style="left:74.31px;top:540px;font-size:14px;color:#34343a;transform:scaleX(0.9179);transform-origin:0 0;">The Best SEO Agency in Orlando</div>
<div class="abs" style="left:314.18px;top:540px;font-size:14px;color:#34343a;transform:scaleX(0.9395);transform-origin:0 0;">User wants to find the best SEO company in Orlando, Florida.</div>
<div class="pill" style="left:755.20px;top:536.40px;width:108.90px;height:18.2px;background:#ffd4e0"></div><div class="abs" style="left:762.53px;top:539px;font-size:14px;color:#2e3036;transform:scaleX(0.9302);transform-origin:0 0;">Listicle/List Post</div>
<div class="pill" style="left:868.50px;top:536.40px;width:142.10px;height:18.2px;background:#f9d1fc"></div><div class="abs" style="left:876.03px;top:539px;font-size:14px;color:#2e3036;transform:scaleX(0.9250);transform-origin:0 0;">Landing/Service Page</div>
<div class="pill" style="left:1084.30px;top:536.40px;width:98.00px;height:18.2px;background:#ffba05"></div><div class="abs" style="left:1092.33px;top:539px;font-size:14px;color:#2e3036;transform:scaleX(0.9587);transform-origin:0 0;">Consideration</div>
<div class="pill" style="left:1236.30px;top:536.40px;width:62.60px;height:18.2px;background:#c8edfd"></div><div class="abs" style="left:1243.88px;top:539px;font-size:14px;color:#2e3036;transform:scaleX(0.9454);transform-origin:0 0;">ItemList</div>
<div class="pill" style="left:1303.30px;top:536.40px;width:95.50px;height:18.2px;background:#ffd66e"></div><div class="abs" style="left:1310.87px;top:539px;font-size:14px;color:#2e3036;transform:scaleX(0.8937);transform-origin:0 0;">LocalBusiness</div>
<div class="pill" style="left:1403.30px;top:536.40px;width:86.90px;height:18.2px;background:#93e088"></div><div class="abs" style="left:1411.10px;top:539px;font-size:14px;color:#2e3036;transform:scaleX(0.9551);transform-origin:0 0;">BlogPosting</div>
<div class="rline" style="top:594.88px"></div>
<div class="abs" style="left:10.63px;top:575px;font-size:11.5px;color:#7b7d83;">13</div>
<div class="bar" style="top:567.04px;background:#048a0e"></div>
<div class="abs" style="left:73.54px;top:573px;font-size:14px;color:#34343a;transform:scaleX(0.9194);transform-origin:0 0;">Best SEO Agency in California</div>
<div class="abs" style="left:314.19px;top:573px;font-size:14px;color:#34343a;transform:scaleX(0.9288);transform-origin:0 0;">User is comparing SEO companies across the state of California.</div>
<div class="pill" style="left:755.20px;top:569.24px;width:108.90px;height:18.2px;background:#ffd4e0"></div><div class="abs" style="left:762.53px;top:572px;font-size:14px;color:#2e3036;transform:scaleX(0.9302);transform-origin:0 0;">Listicle/List Post</div>
<div class="pill" style="left:868.50px;top:569.24px;width:142.10px;height:18.2px;background:#f9d1fc"></div><div class="abs" style="left:876.03px;top:572px;font-size:14px;color:#2e3036;transform:scaleX(0.9250);transform-origin:0 0;">Landing/Service Page</div>
<div class="pill" style="left:1084.30px;top:569.24px;width:98.00px;height:18.2px;background:#ffba05"></div><div class="abs" style="left:1092.33px;top:572px;font-size:14px;color:#2e3036;transform:scaleX(0.9587);transform-origin:0 0;">Consideration</div>
<div class="pill" style="left:1236.30px;top:569.24px;width:62.60px;height:18.2px;background:#c8edfd"></div><div class="abs" style="left:1243.88px;top:572px;font-size:14px;color:#2e3036;transform:scaleX(0.9454);transform-origin:0 0;">ItemList</div>
<div class="pill" style="left:1303.30px;top:569.24px;width:95.50px;height:18.2px;background:#ffd66e"></div><div class="abs" style="left:1310.87px;top:572px;font-size:14px;color:#2e3036;transform:scaleX(0.8937);transform-origin:0 0;">LocalBusiness</div>
<div class="pill" style="left:1403.30px;top:569.24px;width:86.90px;height:18.2px;background:#93e088"></div><div class="abs" style="left:1411.10px;top:572px;font-size:14px;color:#2e3036;transform:scaleX(0.9551);transform-origin:0 0;">BlogPosting</div>
<div class="rline" style="top:627.72px"></div>
<div class="abs" style="left:10.54px;top:608px;font-size:11.5px;color:#7b7d83;">14</div>
<div class="bar" style="top:599.88px;background:#dc043b"></div>
<div class="abs" style="left:74.31px;top:606px;font-size:14px;color:#34343a;transform:scaleX(0.9098);transform-origin:0 0;">The Best SEO Agency in San Diego</div>
<div class="abs" style="left:314.19px;top:606px;font-size:14px;color:#34343a;transform:scaleX(0.9330);transform-origin:0 0;">User is searching for the top SEO company in San Diego, California.</div>
<div class="pill" style="left:755.20px;top:602.08px;width:108.90px;height:18.2px;background:#ffd4e0"></div><div class="abs" style="left:762.53px;top:605px;font-size:14px;color:#2e3036;transform:scaleX(0.9302);transform-origin:0 0;">Listicle/List Post</div>
<div class="pill" style="left:868.50px;top:602.08px;width:142.10px;height:18.2px;background:#f9d1fc"></div><div class="abs" style="left:876.03px;top:605px;font-size:14px;color:#2e3036;transform:scaleX(0.9250);transform-origin:0 0;">Landing/Service Page</div>
<div class="pill" style="left:1084.30px;top:602.08px;width:98.00px;height:18.2px;background:#ffba05"></div><div class="abs" style="left:1092.33px;top:605px;font-size:14px;color:#2e3036;transform:scaleX(0.9587);transform-origin:0 0;">Consideration</div>
<div class="pill" style="left:1236.30px;top:602.08px;width:62.60px;height:18.2px;background:#c8edfd"></div><div class="abs" style="left:1243.88px;top:605px;font-size:14px;color:#2e3036;transform:scaleX(0.9454);transform-origin:0 0;">ItemList</div>
<div class="pill" style="left:1303.30px;top:602.08px;width:95.50px;height:18.2px;background:#ffd66e"></div><div class="abs" style="left:1310.87px;top:605px;font-size:14px;color:#2e3036;transform:scaleX(0.8937);transform-origin:0 0;">LocalBusiness</div>
<div class="pill" style="left:1403.30px;top:602.08px;width:86.90px;height:18.2px;background:#93e088"></div><div class="abs" style="left:1411.10px;top:605px;font-size:14px;color:#2e3036;transform:scaleX(0.9551);transform-origin:0 0;">BlogPosting</div>
<div class="rline" style="top:660.56px"></div>
<div class="abs" style="left:10.62px;top:641px;font-size:11.5px;color:#7b7d83;">15</div>
<div class="bar" style="top:632.72px;background:#048a0e"></div>
<div class="abs" style="left:74.32px;top:638px;font-size:14px;color:#34343a;transform:scaleX(0.8991);transform-origin:0 0;">The Best SEO Agency in San Francisco</div>
<div class="abs" style="left:314.19px;top:638px;font-size:14px;color:#34343a;transform:scaleX(0.9275);transform-origin:0 0;">User wants to find the best SEO company in the San Francisco Bay Area.</div>
<div class="pill" style="left:755.20px;top:634.92px;width:108.90px;height:18.2px;background:#ffd4e0"></div><div class="abs" style="left:762.53px;top:638px;font-size:14px;color:#2e3036;transform:scaleX(0.9302);transform-origin:0 0;">Listicle/List Post</div>
<div class="pill" style="left:868.50px;top:634.92px;width:142.10px;height:18.2px;background:#f9d1fc"></div><div class="abs" style="left:876.03px;top:638px;font-size:14px;color:#2e3036;transform:scaleX(0.9250);transform-origin:0 0;">Landing/Service Page</div>
<div class="pill" style="left:1084.30px;top:634.92px;width:98.00px;height:18.2px;background:#ffba05"></div><div class="abs" style="left:1092.33px;top:638px;font-size:14px;color:#2e3036;transform:scaleX(0.9587);transform-origin:0 0;">Consideration</div>
<div class="pill" style="left:1236.30px;top:634.92px;width:62.60px;height:18.2px;background:#c8edfd"></div><div class="abs" style="left:1243.88px;top:638px;font-size:14px;color:#2e3036;transform:scaleX(0.9454);transform-origin:0 0;">ItemList</div>
<div class="pill" style="left:1303.30px;top:634.92px;width:95.50px;height:18.2px;background:#ffd66e"></div><div class="abs" style="left:1310.87px;top:638px;font-size:14px;color:#2e3036;transform:scaleX(0.8937);transform-origin:0 0;">LocalBusiness</div>
<div class="pill" style="left:1403.30px;top:634.92px;width:86.90px;height:18.2px;background:#93e088"></div><div class="abs" style="left:1411.10px;top:638px;font-size:14px;color:#2e3036;transform:scaleX(0.9551);transform-origin:0 0;">BlogPosting</div>
<div class="rline" style="top:693.40px"></div>
<div class="abs" style="left:10.63px;top:674px;font-size:11.5px;color:#7b7d83;">16</div>
<div class="bar" style="top:665.56px;background:#dc043b"></div>
<div class="abs" style="left:74.31px;top:671px;font-size:14px;color:#34343a;transform:scaleX(0.9199);transform-origin:0 0;">The Best SEO Agency in Miami</div>
<div class="abs" style="left:314.18px;top:671px;font-size:14px;color:#34343a;transform:scaleX(0.9442);transform-origin:0 0;">User is looking to compare top SEO companies in Miami, Florida.</div>
<div class="pill" style="left:755.20px;top:667.76px;width:108.90px;height:18.2px;background:#ffd4e0"></div><div class="abs" style="left:762.53px;top:671px;font-size:14px;color:#2e3036;transform:scaleX(0.9302);transform-origin:0 0;">Listicle/List Post</div>
<div class="pill" style="left:868.50px;top:667.76px;width:142.10px;height:18.2px;background:#f9d1fc"></div><div class="abs" style="left:876.03px;top:671px;font-size:14px;color:#2e3036;transform:scaleX(0.9250);transform-origin:0 0;">Landing/Service Page</div>
<div class="pill" style="left:1084.30px;top:667.76px;width:98.00px;height:18.2px;background:#ffba05"></div><div class="abs" style="left:1092.33px;top:671px;font-size:14px;color:#2e3036;transform:scaleX(0.9587);transform-origin:0 0;">Consideration</div>
<div class="pill" style="left:1236.30px;top:667.76px;width:62.60px;height:18.2px;background:#c8edfd"></div><div class="abs" style="left:1243.88px;top:671px;font-size:14px;color:#2e3036;transform:scaleX(0.9454);transform-origin:0 0;">ItemList</div>
<div class="pill" style="left:1303.30px;top:667.76px;width:95.50px;height:18.2px;background:#ffd66e"></div><div class="abs" style="left:1310.87px;top:671px;font-size:14px;color:#2e3036;transform:scaleX(0.8937);transform-origin:0 0;">LocalBusiness</div>
<div class="pill" style="left:1403.30px;top:667.76px;width:86.90px;height:18.2px;background:#93e088"></div><div class="abs" style="left:1411.10px;top:671px;font-size:14px;color:#2e3036;transform:scaleX(0.9551);transform-origin:0 0;">BlogPosting</div>
<div class="rline" style="top:726.24px"></div>
<div class="abs" style="left:10.67px;top:707px;font-size:11.5px;color:#7b7d83;">17</div>
<div class="bar" style="top:698.40px;background:#048a0e"></div>
<div class="abs" style="left:74.31px;top:704px;font-size:14px;color:#34343a;transform:scaleX(0.9068);transform-origin:0 0;">The Best Local SEO Agency in 2024</div>
<div class="abs" style="left:314.19px;top:704px;font-size:14px;color:#34343a;transform:scaleX(0.9320);transform-origin:0 0;">User wants to find the best agency for local SEO services.</div>
<div class="pill" style="left:755.20px;top:700.60px;width:108.90px;height:18.2px;background:#ffd4e0"></div><div class="abs" style="left:762.53px;top:703px;font-size:14px;color:#2e3036;transform:scaleX(0.9302);transform-origin:0 0;">Listicle/List Post</div>
<div class="pill" style="left:868.50px;top:700.60px;width:142.10px;height:18.2px;background:#f9d1fc"></div><div class="abs" style="left:876.03px;top:703px;font-size:14px;color:#2e3036;transform:scaleX(0.9250);transform-origin:0 0;">Landing/Service Page</div>
<div class="pill" style="left:1084.30px;top:700.60px;width:98.00px;height:18.2px;background:#ffba05"></div><div class="abs" style="left:1092.33px;top:703px;font-size:14px;color:#2e3036;transform:scaleX(0.9587);transform-origin:0 0;">Consideration</div>
<div class="pill" style="left:1236.30px;top:700.60px;width:62.60px;height:18.2px;background:#c8edfd"></div><div class="abs" style="left:1243.88px;top:703px;font-size:14px;color:#2e3036;transform:scaleX(0.9454);transform-origin:0 0;">ItemList</div>
<div class="pill" style="left:1303.30px;top:700.60px;width:95.50px;height:18.2px;background:#ffd66e"></div><div class="abs" style="left:1310.87px;top:703px;font-size:14px;color:#2e3036;transform:scaleX(0.8937);transform-origin:0 0;">LocalBusiness</div>
<div class="pill" style="left:1403.30px;top:700.60px;width:86.90px;height:18.2px;background:#93e088"></div><div class="abs" style="left:1411.10px;top:703px;font-size:14px;color:#2e3036;transform:scaleX(0.9551);transform-origin:0 0;">BlogPosting</div>
<div class="rline" style="top:759.08px"></div>
<div class="abs" style="left:10.63px;top:740px;font-size:11.5px;color:#7b7d83;">18</div>
<div class="bar" style="top:731.24px;background:#dc043b"></div>
<div class="abs" style="left:73.53px;top:737px;font-size:14px;color:#34343a;transform:scaleX(0.9250);transform-origin:0 0;">Best SEO Company for Contractors</div>
<div class="abs" style="left:314.18px;top:737px;font-size:14px;color:#34343a;transform:scaleX(0.9394);transform-origin:0 0;">User is a contractor seeking the top SEO company to meet their specifi…</div>
<div class="pill" style="left:755.20px;top:733.44px;width:108.90px;height:18.2px;background:#ffd4e0"></div><div class="abs" style="left:762.53px;top:736px;font-size:14px;color:#2e3036;transform:scaleX(0.9302);transform-origin:0 0;">Listicle/List Post</div>
<div class="pill" style="left:868.50px;top:733.44px;width:142.10px;height:18.2px;background:#f9d1fc"></div><div class="abs" style="left:876.03px;top:736px;font-size:14px;color:#2e3036;transform:scaleX(0.9250);transform-origin:0 0;">Landing/Service Page</div>
<div class="pill" style="left:1084.30px;top:733.44px;width:98.00px;height:18.2px;background:#ffba05"></div><div class="abs" style="left:1092.33px;top:736px;font-size:14px;color:#2e3036;transform:scaleX(0.9587);transform-origin:0 0;">Consideration</div>
<div class="pill" style="left:1236.30px;top:733.44px;width:62.60px;height:18.2px;background:#c8edfd"></div><div class="abs" style="left:1243.88px;top:736px;font-size:14px;color:#2e3036;transform:scaleX(0.9454);transform-origin:0 0;">ItemList</div>
<div class="pill" style="left:1303.30px;top:733.44px;width:95.50px;height:18.2px;background:#ffd66e"></div><div class="abs" style="left:1310.87px;top:736px;font-size:14px;color:#2e3036;transform:scaleX(0.8937);transform-origin:0 0;">LocalBusiness</div>
<div class="pill" style="left:1403.30px;top:733.44px;width:86.90px;height:18.2px;background:#93e088"></div><div class="abs" style="left:1411.10px;top:736px;font-size:14px;color:#2e3036;transform:scaleX(0.9551);transform-origin:0 0;">BlogPosting</div>
<div class="rline" style="top:791.92px"></div>
<div class="abs" style="left:10.64px;top:772px;font-size:11.5px;color:#7b7d83;">19</div>
<div class="bar" style="top:764.08px;background:#048a0e"></div>
<div class="abs" style="left:74.31px;top:770px;font-size:14px;color:#34343a;transform:scaleX(0.9145);transform-origin:0 0;">The Best SEO Agency for Plumbers</div>
<div class="abs" style="left:314.18px;top:770px;font-size:14px;color:#34343a;transform:scaleX(0.9427);transform-origin:0 0;">User is a plumber looking for an SEO company with expertise in their fi…</div>
<div class="pill" style="left:755.20px;top:766.28px;width:108.90px;height:18.2px;background:#ffd4e0"></div><div class="abs" style="left:762.53px;top:769px;font-size:14px;color:#2e3036;transform:scaleX(0.9302);transform-origin:0 0;">Listicle/List Post</div>
<div class="pill" style="left:868.50px;top:766.28px;width:142.10px;height:18.2px;background:#f9d1fc"></div><div class="abs" style="left:876.03px;top:769px;font-size:14px;color:#2e3036;transform:scaleX(0.9250);transform-origin:0 0;">Landing/Service Page</div>
<div class="pill" style="left:1084.30px;top:766.28px;width:98.00px;height:18.2px;background:#ffba05"></div><div class="abs" style="left:1092.33px;top:769px;font-size:14px;color:#2e3036;transform:scaleX(0.9587);transform-origin:0 0;">Consideration</div>
<div class="pill" style="left:1236.30px;top:766.28px;width:62.60px;height:18.2px;background:#c8edfd"></div><div class="abs" style="left:1243.88px;top:769px;font-size:14px;color:#2e3036;transform:scaleX(0.9454);transform-origin:0 0;">ItemList</div>
<div class="pill" style="left:1303.30px;top:766.28px;width:95.50px;height:18.2px;background:#ffd66e"></div><div class="abs" style="left:1310.87px;top:769px;font-size:14px;color:#2e3036;transform:scaleX(0.8937);transform-origin:0 0;">LocalBusiness</div>
<div class="pill" style="left:1403.30px;top:766.28px;width:86.90px;height:18.2px;background:#93e088"></div><div class="abs" style="left:1411.10px;top:769px;font-size:14px;color:#2e3036;transform:scaleX(0.9551);transform-origin:0 0;">BlogPosting</div>
<div class="rline" style="top:824.76px"></div>
<div class="abs" style="left:10.75px;top:805px;font-size:11.5px;color:#7b7d83;">20</div>
<div class="bar" style="top:796.92px;background:#dc043b"></div>
<div class="abs" style="left:74.32px;top:803px;font-size:14px;color:#34343a;transform:scaleX(0.9005);transform-origin:0 0;">The Best SEO Agency for Small Bus...</div>
<div class="abs" style="left:314.20px;top:803px;font-size:14px;color:#34343a;transform:scaleX(0.9248);transform-origin:0 0;">User wants to find the top local SEO company to help their small busin…</div>
<div class="pill" style="left:755.20px;top:799.12px;width:108.90px;height:18.2px;background:#ffd4e0"></div><div class="abs" style="left:762.53px;top:802px;font-size:14px;color:#2e3036;transform:scaleX(0.9302);transform-origin:0 0;">Listicle/List Post</div>
<div class="pill" style="left:868.50px;top:799.12px;width:142.10px;height:18.2px;background:#f9d1fc"></div><div class="abs" style="left:876.03px;top:802px;font-size:14px;color:#2e3036;transform:scaleX(0.9250);transform-origin:0 0;">Landing/Service Page</div>
<div class="pill" style="left:1084.30px;top:799.12px;width:98.00px;height:18.2px;background:#ffba05"></div><div class="abs" style="left:1092.33px;top:802px;font-size:14px;color:#2e3036;transform:scaleX(0.9587);transform-origin:0 0;">Consideration</div>
<div class="pill" style="left:1236.30px;top:799.12px;width:62.60px;height:18.2px;background:#c8edfd"></div><div class="abs" style="left:1243.88px;top:802px;font-size:14px;color:#2e3036;transform:scaleX(0.9454);transform-origin:0 0;">ItemList</div>
<div class="pill" style="left:1303.30px;top:799.12px;width:95.50px;height:18.2px;background:#ffd66e"></div><div class="abs" style="left:1310.87px;top:802px;font-size:14px;color:#2e3036;transform:scaleX(0.8937);transform-origin:0 0;">LocalBusiness</div>
<div class="pill" style="left:1403.30px;top:799.12px;width:86.90px;height:18.2px;background:#93e088"></div><div class="abs" style="left:1411.10px;top:802px;font-size:14px;color:#2e3036;transform:scaleX(0.9551);transform-origin:0 0;">BlogPosting</div>
 </div>
</div>
<!-- column lines -->
<div class="bx" style="left:750px;top:137px;width:1px;height:673.5px;background:#ececec"></div>
<div class="bx" style="left:1080.2px;top:137px;width:1px;height:673.5px;background:#ececec"></div>
<div class="bx" style="left:1231px;top:137px;width:1px;height:673.5px;background:#ececec"></div>
<div class="bx" style="left:1493px;top:137px;width:1px;height:673.5px;background:#efefef"></div>
<div class="bx" style="left:749.2px;top:140.1px;width:3.5px;height:26.6px;border-radius:1.75px;background:#1a62e6"></div>
<div class="bx" style="left:1489px;top:172px;width:8.8px;height:107.4px;border-radius:4.4px;background:rgba(150,150,150,0.72)"></div>

<!-- FOOTER -->
<div class="bx" style="left:0;top:810px;width:1500px;height:34px;background:#f8f8f8;border-top:1px solid #e8e8e8"></div>
<div class="bx" style="left:416.3px;top:833.3px;width:171.7px;height:8.5px;border-radius:4.25px;background:#b3b3b3"></div>
<!-- frozen divider -->
<div class="bx" style="left:305.6px;top:137px;width:1.4px;height:707px;background:#dadada"></div>
<div class="bx" style="left:307px;top:137px;width:4px;height:707px;background:linear-gradient(to right,rgba(0,0,0,0.055),rgba(0,0,0,0))"></div>
<div class="bx" style="left:8.5px;top:794.7px;width:133.4px;height:34.8px;border-radius:17.4px;background:#fff;border:1px solid #e2e2e2"></div>
<div class="bx" style="left:54px;top:795.6px;width:1px;height:33px;background:#ebebeb"></div>
<svg style="left:0;top:0" width="1500" height="844" viewBox="0 0 1500 844">
  <path d="M33.3 806.6 V817.7 M27.7 812.2 H38.9" stroke="#3a3a3a" stroke-width="1.1"/>
  <rect x="68.6" y="809.7" width="13.6" height="3.6" rx="1.8" transform="rotate(-45 75.4 811.5)" fill="none" stroke="#333" stroke-width="1.15"/>
  <path d="M76.3 808.6 L78.3 810.6" stroke="#333" stroke-width="1.1"/>
  <path d="M72.1 805.3 Q72.68799999999999 806.812 74.19999999999999 807.4 Q72.68799999999999 807.9879999999999 72.1 809.5 Q71.512 807.9879999999999 70.0 807.4 Q71.512 806.812 72.1 805.3Z M80.6 810.8 Q81.3 812.5999999999999 83.1 813.3 Q81.3 814.0 80.6 815.8 Q79.89999999999999 814.0 78.1 813.3 Q79.89999999999999 812.5999999999999 80.6 810.8Z M77.5 814.4 Q78.06 815.84 79.5 816.4 Q78.06 816.9599999999999 77.5 818.4 Q76.94 816.9599999999999 75.5 816.4 Q76.94 815.84 77.5 814.4Z" fill="#333"/>
</svg>
<div class="abs" style="left:91.27px;top:806px;font-size:14px;color:#333;transform:scaleX(0.9495);transform-origin:0 0;">Add...</div><div class="abs" style="left:150.14px;top:817px;font-size:12px;color:#5f6168;transform:scaleX(0.9532);transform-origin:0 0;">114 contents</div>
</body></html>
